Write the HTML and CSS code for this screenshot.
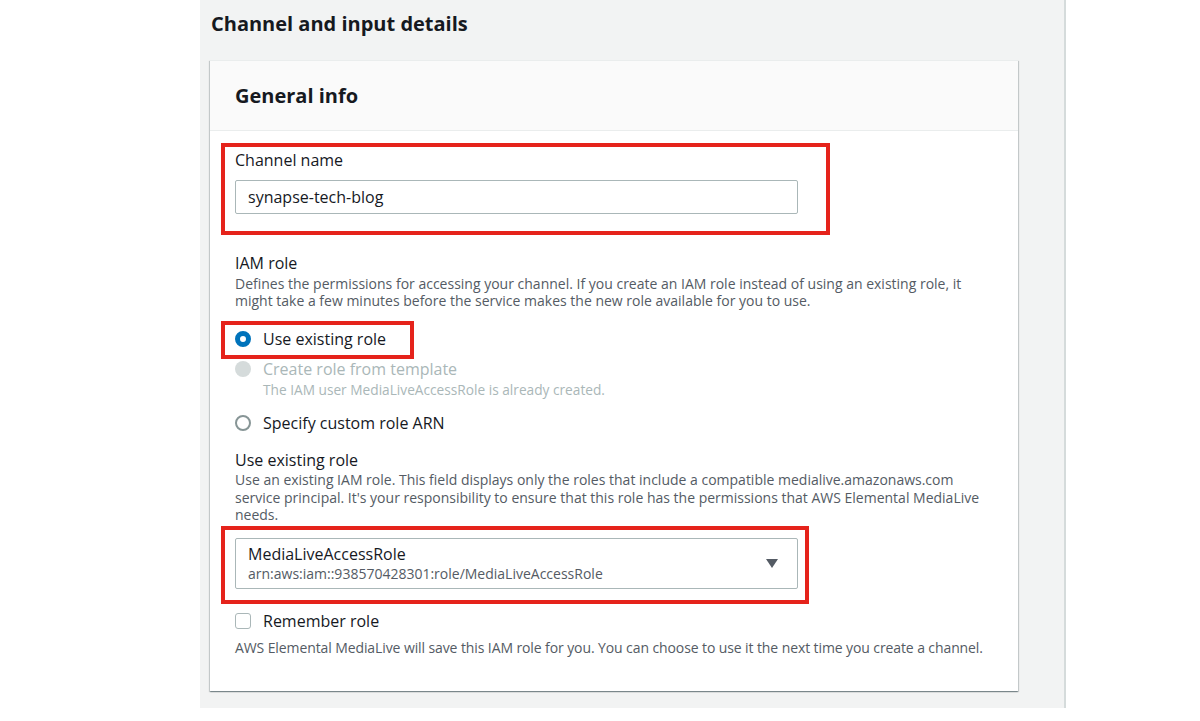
FILE: index.html
```html
<!DOCTYPE html>
<html>
<head>
<meta charset="utf-8">
<link rel="stylesheet" href="styles.css">
</head>
<body>
<div class="panel">
  <h2 class="page-title">Channel and input details</h2>
  <div class="card">
    <div class="card-header"><h3>General info</h3></div>
    <div class="card-body">
      <div class="field name-field">
        <div class="label">Channel name</div>
        <div class="input">synapse-tech-blog</div>
        <div class="mark mark-name"></div>
      </div>

      <div class="field iam-field">
        <div class="label">IAM role</div>
        <div class="desc">Defines the permissions for accessing your channel. If you create an IAM role instead of using an existing role, it might take a few minutes before the service makes the new role available for you to use.</div>
      </div>

      <div class="radios">
        <div class="radio-row checked">
          <span class="radio"></span><span class="rlabel">Use existing role</span>
          <div class="mark mark-radio"></div>
        </div>
        <div class="radio-row disabled">
          <span class="radio"></span><span class="rlabel">Create role from template</span>
        </div>
        <div class="rsub">The IAM user MediaLiveAccessRole is already created.</div>
        <div class="radio-row last">
          <span class="radio"></span><span class="rlabel">Specify custom role ARN</span>
        </div>
      </div>

      <div class="field role-field">
        <div class="label">Use existing role</div>
        <div class="desc desc-wide">Use an existing IAM role. This field displays only the roles that include a compatible medialive.amazonaws.com service principal. It's your responsibility to ensure that this role has the permissions that AWS Elemental MediaLive needs.</div>
        <div class="select">
          <div class="select-text">
            <div class="select-title">MediaLiveAccessRole</div>
            <div class="select-sub">arn:aws:iam::938570428301:role/MediaLiveAccessRole</div>
          </div>
          <span class="caret"></span>
          <div class="mark mark-select"></div>
        </div>
      </div>

      <div class="check-row">
        <span class="checkbox"></span><span class="rlabel">Remember role</span>
      </div>
      <div class="desc check-desc">AWS Elemental MediaLive will save this IAM role for you. You can choose to use it the next time you create a channel.</div>
    </div>
  </div>
</div>
</body>
</html>
```

FILE: styles.css
```css
* { box-sizing: border-box; }
html, body { margin: 0; padding: 0; background: #ffffff; }
body {
  font-family: "Open Sans", "Liberation Sans", Arial, sans-serif;
  color: #16191f;
}
.panel {
  margin-left: 200px;
  width: 866px;
  height: 708px;
  background: #f2f3f3;
  border-right: 2px solid #d5dbdb;
  padding: 12px 0 0 10px;
}
.page-title {
  margin: 0 0 0 1px;
  font-size: 20px;
  line-height: 24px;
  font-weight: 700;
  color: #16191f;
}
.card {
  margin-top: 24px;
  width: 808px;
  background: #ffffff;
  box-shadow: 0 1px 1px 0 rgba(0,28,36,.3), 1px 1px 1px 0 rgba(0,28,36,.15), -1px 1px 1px 0 rgba(0,28,36,.15);
  border-top: 1px solid #eaeded;
}
.card-header {
  height: 70px;
  background: #fafafa;
  border-bottom: 1px solid #eaeded;
  padding: 0 25px;
  display: flex;
  align-items: center;
}
.card-header h3 {
  margin: 1px 0 0 0;
  font-size: 20px;
  font-weight: 700;
  line-height: 24px;
}
.card-body {
  padding: 19px 25px 35px 25px;
}
.field { position: relative; }
.label {
  font-size: 16px;
  line-height: 20px;
  color: #16191f;
}
.input {
  margin-top: 10px;
  width: 563px;
  height: 34px;
  border: 1px solid #aab7b8;
  border-radius: 2px;
  padding: 0 12px;
  font-size: 16px;
  line-height: 32px;
}
.mark {
  position: absolute;
  border: 4px solid #e5231b;
  pointer-events: none;
}
.mark-name { left: -14px; top: -7px; width: 609px; height: 92px; }
.iam-field { margin-top: 39px; }
.desc {
  margin-top: 2px;
  font-size: 14px;
  line-height: 17px;
  color: #545b64;
}
.radios { margin-top: 18px; }
.radio-row {
  position: relative;
  display: flex;
  align-items: center;
  height: 24px;
  width: fit-content;
}
.radio-row + .radio-row { margin-top: 6px; }
.radio-row.last { margin-top: 13px; }
.radio {
  width: 16px;
  height: 16px;
  border-radius: 50%;
  border: 2px solid #879596;
  background: #fff;
  margin-right: 12px;
  flex: none;
}
.checked .radio { border: 5px solid #0073bb; }
.disabled .radio { border: none; background: #d5dbdb; }
.disabled .rlabel { color: #aab7b8; }
.rlabel { font-size: 16px; line-height: 20px; }
.mark-radio { left: -14px; top: -6px; width: 193px; height: 38px; }
.rsub {
  margin-left: 28px;
  font-size: 13.7px;
  line-height: 17px;
  color: #aab7b8;
}
.role-field { margin-top: 15px; }
.desc-wide { line-height: 17.5px; margin-top: 1px; }
.select {
  position: relative;
  margin-top: 14px;
  width: 563px;
  height: 51px;
  border: 1px solid #aab7b8;
  border-radius: 2px;
  padding: 0 12px;
  display: flex;
  align-items: center;
  justify-content: space-between;
}
.select-title { font-size: 16px; line-height: 20px; margin-top: 1px; }
.select-sub { font-size: 14px; line-height: 18px; color: #545b64; margin-top: 1px; }
.caret {
  width: 0; height: 0;
  border-left: 6px solid transparent;
  border-right: 6px solid transparent;
  border-top: 9px solid #545b64;
  margin-right: 7px;
}
.mark-select { left: -15px; top: -13px; width: 588px; height: 78px; }
.check-row {
  margin-top: 20px;
  display: flex;
  align-items: center;
  height: 24px;
}
.checkbox {
  width: 16px;
  height: 16px;
  border: 1px solid #aab7b8;
  border-radius: 3px;
  margin-right: 12px;
  background: #fff;
}
.check-desc { margin-top: 6px; letter-spacing: -0.1px; white-space: nowrap; }
```
